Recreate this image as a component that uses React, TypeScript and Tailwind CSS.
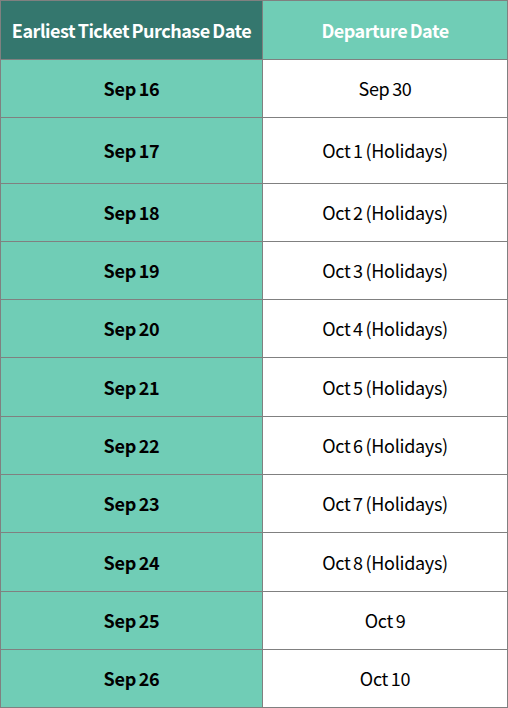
import React from 'react'

const rows: { buy: string; depart: string; h: string }[] = [
  { buy: 'Sep 16', depart: 'Sep 30', h: 'h-[57px]' },
  { buy: 'Sep 17', depart: 'Oct 1 (Holidays)', h: 'h-[65px]' },
  { buy: 'Sep 18', depart: 'Oct 2 (Holidays)', h: 'h-[57px]' },
  { buy: 'Sep 19', depart: 'Oct 3 (Holidays)', h: 'h-[57px]' },
  { buy: 'Sep 20', depart: 'Oct 4 (Holidays)', h: 'h-[57px]' },
  { buy: 'Sep 21', depart: 'Oct 5 (Holidays)', h: 'h-[58px]' },
  { buy: 'Sep 22', depart: 'Oct 6 (Holidays)', h: 'h-[57px]' },
  { buy: 'Sep 23', depart: 'Oct 7 (Holidays)', h: 'h-[57px]' },
  { buy: 'Sep 24', depart: 'Oct 8 (Holidays)', h: 'h-[58px]' },
  { buy: 'Sep 25', depart: 'Oct 9', h: 'h-[57px]' },
  { buy: 'Sep 26', depart: 'Oct 10', h: 'h-[57px]' },
]

export default function App() {
  return (
    <div
      className="w-[508px] h-[708px] bg-[#808080] p-px grid grid-cols-[261px_244px] gap-px text-[18px] text-black tracking-[-0.3px] [word-spacing:-1px]"
      style={{ fontFamily: '"Noto Sans CJK KR", "Noto Sans", sans-serif' }}
    >
      <div className="h-[58px] bg-[#34776e] text-white font-bold flex items-center justify-center tracking-[-0.5px]">
        Earliest Ticket Purchase Date
      </div>
      <div className="h-[58px] bg-[#70cdb6] text-white font-bold flex items-center justify-center tracking-[-0.5px]">
        Departure Date
      </div>
      {rows.map((r) => (
        <React.Fragment key={r.buy}>
          <div className={`${r.h} bg-[#70cdb6] font-bold flex items-center justify-center`}>
            {r.buy}
          </div>
          <div className={`${r.h} bg-white flex items-center justify-center`}>
            {r.depart}
          </div>
        </React.Fragment>
      ))}
    </div>
  )
}
